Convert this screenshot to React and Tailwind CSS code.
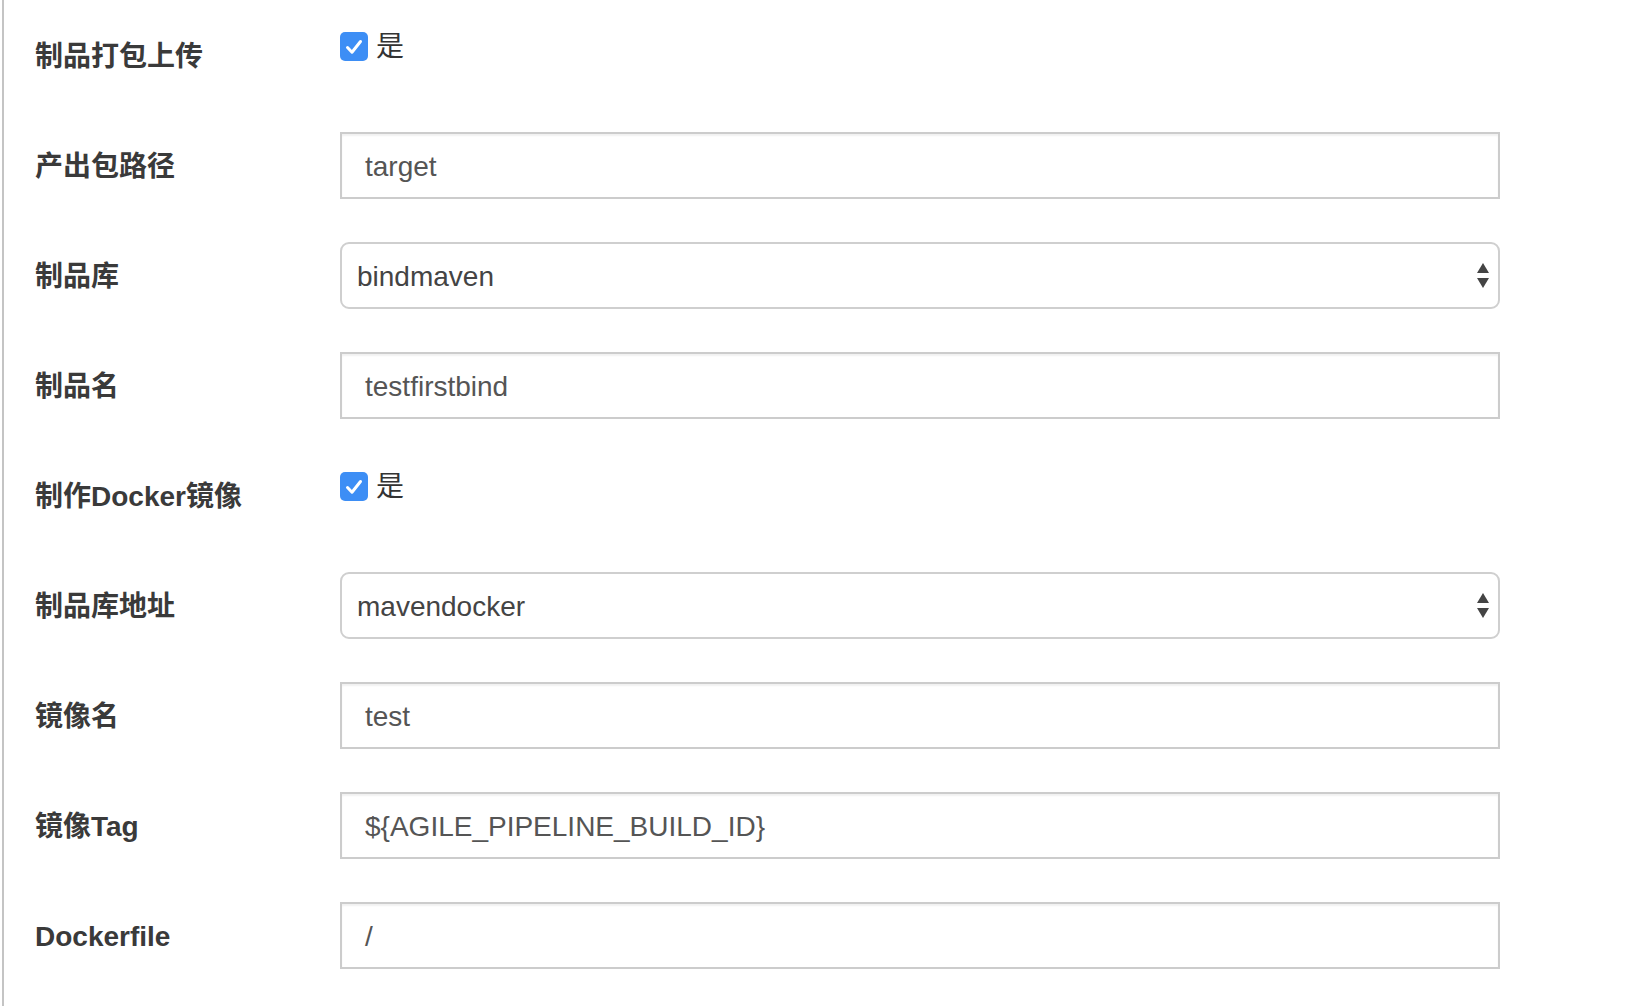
import React from "react";

const FONT = {
  fontFamily: '"Liberation Sans", "Noto Sans CJK SC", sans-serif',
};

const rows = [
  { label: "制品打包上传", type: "check" },
  { label: "产出包路径", type: "input", value: "target" },
  { label: "制品库", type: "select", value: "bindmaven" },
  { label: "制品名", type: "input", value: "testfirstbind" },
  { label: "制作Docker镜像", type: "check" },
  { label: "制品库地址", type: "select", value: "mavendocker" },
  { label: "镜像名", type: "input", value: "test" },
  { label: "镜像Tag", type: "input", value: "${AGILE_PIPELINE_BUILD_ID}" },
  { label: "Dockerfile", type: "input", value: "/" },
];

function CheckField() {
  return (
    <div className="flex items-start h-full pt-[10px]">
      <label className="flex items-center gap-[8px]">
        <span className="w-[28px] h-[29px] rounded-[5px] bg-[#3d8ef5] flex items-center justify-center">
          <svg width="18" height="16" viewBox="0 0 18 16" fill="none">
            <path
              d="M2.5 8.5 L7 13.2 L15.5 2.5"
              stroke="white"
              strokeWidth="3"
              strokeLinecap="round"
              strokeLinejoin="round"
            />
          </svg>
        </span>
        <span className="text-[28px] leading-none text-[#333]">是</span>
      </label>
    </div>
  );
}

function TextField({ value }) {
  return (
    <div className="w-[1160px] h-[67px] border-2 border-[#cccccc] bg-white shadow-[inset_0_2px_2px_rgba(0,0,0,0.06)] flex items-center px-[23px] pt-[2px]">
      <span className="text-[28px] text-[#555] leading-none">{value}</span>
    </div>
  );
}

function SelectField({ value }) {
  return (
    <div className="w-[1160px] h-[67px] border-2 border-[#cfcfcf] rounded-[9px] bg-white flex items-center justify-between pl-[15px] pr-[8px]">
      <span className="text-[28px] text-[#444] leading-none pt-[2px]">{value}</span>
      <svg width="14" height="28" viewBox="0 0 14 28">
        <path d="M7 1 L13 11 L1 11 Z" fill="#444" />
        <path d="M1 16 L13 16 L7 26 Z" fill="#444" />
      </svg>
    </div>
  );
}

export default function App() {
  return (
    <div className="w-full h-[1006px] bg-white overflow-hidden" style={FONT}>
      <div className="ml-[2px] h-full border-l-2 border-[#c4c4c4] pl-[31px] pt-[22px] flex flex-col gap-[42px]">
        {rows.map((row) => (
          <div key={row.label} className="flex h-[68px]">
            <div className="w-[305px] flex items-center pt-[2px]">
              <span className="text-[28px] font-bold text-[#3a3a3a] leading-none">
                {row.label}
              </span>
            </div>
            {row.type === "check" && <CheckField />}
            {row.type === "input" && <TextField value={row.value} />}
            {row.type === "select" && <SelectField value={row.value} />}
          </div>
        ))}
      </div>
    </div>
  );
}
